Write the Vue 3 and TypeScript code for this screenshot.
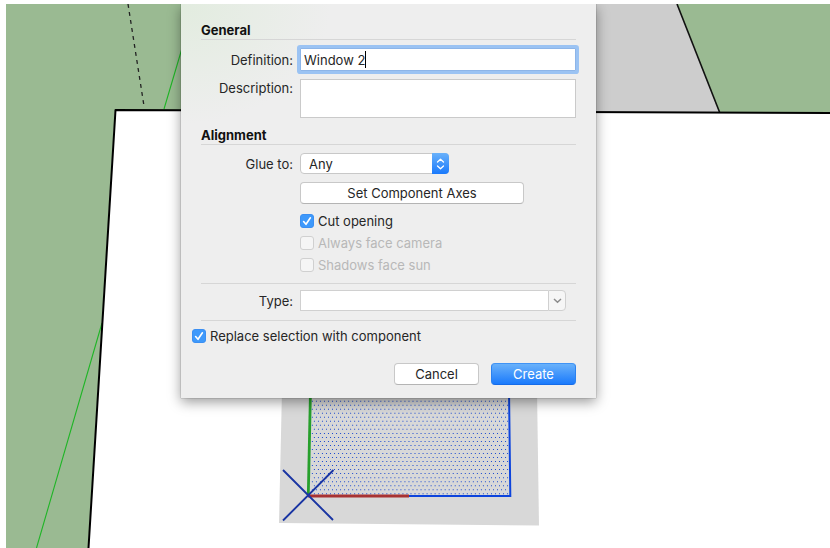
<script setup lang="ts">
import { ref } from 'vue'

interface Option {
  id: string
  label: string
  disabled: boolean
  checked: boolean
}

const definition = ref('Window 2')
const description = ref('')
const glue = ref('Any')
const kind = ref('')
const replaceSelection = ref(true)
const glueTargets: string[] = ['Any']

const options = ref<Option[]>([
  { id: 'cut', label: 'Cut opening', disabled: false, checked: true },
  { id: 'camera', label: 'Always face camera', disabled: true, checked: false },
  { id: 'sun', label: 'Shadows face sun', disabled: true, checked: false },
])

/* Staggered dot screen that marks the selected face. */
function dotScreen(): string {
  const step = 4.024
  let d = ''
  for (let row = -15; row <= 10; row++) {
    const y = 453 + row * step
    const shift = row % 2 === 0 ? 0 : step / 2
    for (let col = -6; col <= 45; col++) {
      const x = 330 + col * step + shift
      if (x > 310 && x < 508) d += `M${x.toFixed(2)} ${y.toFixed(2)}h1v1h-1z`
    }
  }
  return d
}
const dots = dotScreen()
</script>

<template>
  <main class="stage">
    <svg class="scene" viewBox="6 4 824 544" preserveAspectRatio="xMinYMin slice" aria-hidden="true">
      <rect x="6" y="4" width="824" height="544" fill="#9aba92" />
      <path d="M560 4H677L719 112H560z" fill="#cdcdcd" />
      <path d="M677 4L719.500 112" stroke="#111" stroke-width="1.6" fill="none" />
      <path d="M128 4L144 106" stroke="#222" stroke-width="1.3" stroke-dasharray="4 4.100" fill="none" />
      <path d="M115 110L830 113V548H88z" fill="#fff" />
      <path d="M183 45L164 109M102 323L36.500 548" stroke="#1fb526" stroke-width="1.100" fill="none" />
      <path d="M88.500 548L115.500 110L830 113" stroke="#000" stroke-width="2" stroke-linejoin="round" fill="none" />
      <path d="M282 390L279 523L539 525.500L537 390z" fill="#d8d8d8" />
      <path :d="dots" fill="#1c4bd0" />
      <path d="M509 390L510.300 496H409" stroke="#0d44dc" stroke-width="2" fill="none" />
      <path d="M308 496H409" stroke="#a83232" stroke-width="3" fill="none" />
      <path d="M310.500 390L308.300 495" stroke="#27a02c" stroke-width="2.800" fill="none" />
      <path d="M283 470L333 520M333.500 470L283 520.500" stroke="#1a35a3" stroke-width="1.900" fill="none" />
    </svg>

    <form class="dialog" @submit.prevent>
      <h2>General</h2>
      <div class="row">
        <label for="definition">Definition:</label>
        <div class="focused">
          <input id="definition" v-model="definition" type="text" class="field" />
          <span class="caret"></span>
        </div>
      </div>
      <div class="row top">
        <label for="description">Description:</label>
        <textarea id="description" v-model="description" class="field area"></textarea>
      </div>

      <h2>Alignment</h2>
      <div class="row">
        <label for="glue">Glue to:</label>
        <div class="popup">
          <select id="glue" v-model="glue">
            <option v-for="g in glueTargets" :key="g">{{ g }}</option>
          </select>
          <span class="stepper">
            <svg width="9" height="12" viewBox="0 0 9 12">
              <path d="M1.500 4L4.500 1.300L7.500 4M1.500 8L4.500 10.700L7.500 8" fill="none" stroke="#fff" stroke-width="1.300" stroke-linecap="round" stroke-linejoin="round" />
            </svg>
          </span>
        </div>
      </div>
      <div class="indent">
        <button type="button" class="push axes">Set Component Axes</button>
        <div class="checks">
          <label v-for="o in options" :key="o.id" class="check" :class="{ off: o.disabled }">
            <input v-model="o.checked" type="checkbox" :disabled="o.disabled" />
            <svg v-if="o.checked" class="tick" width="14" height="14" viewBox="0 0 14 14">
              <path d="M3.600 7.500L6 10.300L10.400 3.800" fill="none" stroke="#fff" stroke-width="1.600" stroke-linecap="round" stroke-linejoin="round" />
            </svg>
            <span>{{ o.label }}</span>
          </label>
        </div>
      </div>

      <div class="type">
        <div class="row">
          <label for="type">Type:</label>
          <div class="combo">
            <input id="type" v-model="kind" type="text" />
            <button type="button" aria-label="Show types">
              <svg width="9" height="6" viewBox="0 0 9 6">
                <path d="M1 1L4.500 4.200L8 1" fill="none" stroke="#8c8c8c" stroke-width="1.500" />
              </svg>
            </button>
          </div>
        </div>
      </div>

      <label class="check replace">
        <input v-model="replaceSelection" type="checkbox" />
        <svg v-if="replaceSelection" class="tick" width="14" height="14" viewBox="0 0 14 14">
          <path d="M3.600 7.500L6 10.300L10.400 3.800" fill="none" stroke="#fff" stroke-width="1.600" stroke-linecap="round" stroke-linejoin="round" />
        </svg>
        <span>Replace selection with component</span>
      </label>

      <div class="actions">
        <button type="button" class="push">Cancel</button>
        <button type="submit" class="push primary">Create</button>
      </div>
    </form>
  </main>
</template>

<style>
body {
  background: #fff;
}
</style>

<style scoped>
.stage {
  position: relative;
  display: grid;
  grid-template-columns: 175fr minmax(0, 415px) 234fr;
  align-items: start;
  margin: 4px 0 0 6px;
  min-height: calc(100vh - 4px);
  overflow: hidden;
  font: 13px/18px Inter, "Liberation Sans", sans-serif;
  color: #262626;
}
.scene {
  position: absolute;
  inset: 0;
  width: 100%;
  height: 100%;
}
.dialog {
  position: relative;
  grid-column: 2;
  box-sizing: border-box;
  padding: 17px 20px 13px;
  background: radial-gradient(ellipse 150px 120px at 0 0, #e2ecdf, #eeeeee);
  box-shadow: 0 0 1px rgba(0, 0, 0, 0.5), 0 4px 12px rgba(0, 0, 0, 0.4);
}
h2 {
  margin: 0 0 8px;
  border-bottom: 1px solid #d6d6d6;
  font-size: 13px;
  line-height: 18px;
  font-weight: 700;
  color: #111;
}
.row {
  display: grid;
  grid-template-columns: 92px minmax(0, 1fr);
  align-items: center;
  column-gap: 7px;
  margin-bottom: 8px;
}
.row > label {
  text-align: right;
}
.top {
  align-items: start;
}
input,
textarea,
select,
button {
  box-sizing: border-box;
  margin: 0;
  font: inherit;
  color: inherit;
  outline: none;
}
.focused {
  position: relative;
}
.field {
  display: block;
  width: 100%;
  height: 23px;
  padding: 1px 3px 0;
  border: 1px solid #8db5e8;
  background: #fff;
}
.focused .field {
  box-shadow: 0 0 0 3px #9bc3f3;
  border-radius: 1px;
}
.caret {
  position: absolute;
  left: 65px;
  top: 3px;
  width: 1px;
  height: 17px;
  background: #000;
}
.area {
  height: 39px;
  border-color: #cacaca;
  resize: none;
}
.popup {
  position: relative;
  width: 149px;
  height: 21px;
}
.popup select {
  display: block;
  width: 100%;
  height: 21px;
  padding: 0 24px 0 8px;
  border: 1px solid #c8c8c8;
  border-radius: 4px;
  background: #fff;
  appearance: none;
}
.stepper {
  position: absolute;
  top: 0;
  right: 0;
  display: flex;
  align-items: center;
  justify-content: center;
  width: 17px;
  height: 21px;
  border-radius: 0 4px 4px 0;
  background: linear-gradient(#69b1fa, #1a7afc);
  pointer-events: none;
}
.indent {
  padding-left: 99px;
}
.push {
  width: 85px;
  height: 22px;
  padding: 0;
  border: 1px solid #c8c8c8;
  border-bottom-color: #b4b4b4;
  border-radius: 4px;
  background: #fff;
}
.axes {
  display: block;
  width: 224px;
}
.checks {
  padding-top: 6px;
}
.check {
  position: relative;
  display: flex;
  align-items: center;
  gap: 4px;
  height: 22px;
}
.check input {
  width: 14px;
  height: 14px;
  border: 1px solid #c6c6c6;
  border-radius: 3px;
  background: #fff;
  appearance: none;
}
.check input:checked {
  border-color: #3b8ff2;
  background: #3e99fb;
}
.check input:disabled {
  border-color: #d0d0d0;
  background: #f5f5f5;
}
.tick {
  position: absolute;
  left: 0;
  top: 4px;
  pointer-events: none;
}
.off {
  color: #b8b8b8;
}
.type {
  margin-top: 7px;
  padding: 6px 0 1px;
  border: solid #d6d6d6;
  border-width: 1px 0;
}
.combo {
  display: flex;
  width: 266px;
  height: 21px;
}
.combo input {
  flex: 1;
  min-width: 0;
  padding: 0 3px;
  border: 1px solid #d0d0d0;
  border-right: 0;
  background: #fff;
}
.combo button {
  display: flex;
  align-items: center;
  justify-content: center;
  width: 18px;
  padding: 0;
  border: 1px solid #d0d0d0;
  border-radius: 0 4px 4px 0;
  background: #f6f6f6;
}
.replace {
  margin: 4px 0 16px -9px;
}
.actions {
  display: flex;
  justify-content: flex-end;
  gap: 12px;
}
.primary {
  border-color: #3f93f5 #2b82f0 #156be8;
  background: linear-gradient(#69b1fa, #1a7afc);
  color: #fff;
}
</style>
